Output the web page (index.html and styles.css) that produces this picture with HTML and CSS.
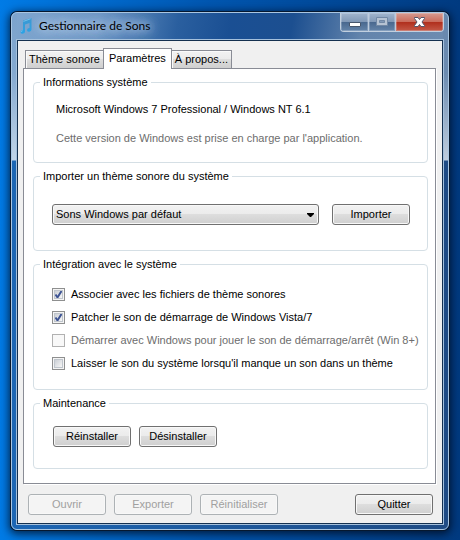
FILE: index.html
```html
<!DOCTYPE html>
<html lang="fr">
<head>
<meta charset="utf-8">
<meta name="viewport" content="width=device-width, initial-scale=1">
<title>Gestionnaire de Sons</title>
<link rel="stylesheet" href="styles.css">
</head>
<body>
<main class="window">
  <header class="titlebar">
    <svg class="app-icon" viewBox="0 0 12 16" aria-hidden="true">
      <defs><linearGradient id="note" x1="0" y1="0" x2="0" y2="1"><stop offset="0" stop-color="#3d97d0"/><stop offset="1" stop-color="#2aa3e6"/></linearGradient></defs>
      <path fill="url(#note)" d="M3 2.500 11.500 0V11.500A2.300 1.800 -20 1 1 9.500 10V5L5 6.500V13.500A2.300 1.800 -20 1 1 3 12Z"/>
      <path fill="none" stroke="#8bd0f4" stroke-width=".7" d="M3.400 3.400 10.600 .8M1 13.500 2.500 12.800"/>
    </svg>
    <h1 class="title">Gestionnaire de Sons</h1>
    <div class="controls">
      <button class="control minimize" aria-label="Réduire"><svg viewBox="0 0 28 18"><rect x="8.500" y="9.500" width="11" height="4" rx=".5" fill="#fff" stroke="#46566d"/></svg></button>
      <button class="control maximize" aria-label="Agrandir" disabled><svg viewBox="0 0 27 18"><path d="M7.500 4.500h11v8h-11zM10.500 7.500v2h5v-2z" fill="#b6c3d3" fill-rule="evenodd" stroke="#7188a5"/></svg></button>
      <button class="control close" aria-label="Fermer"><svg viewBox="0 0 47 18"><path d="M18.500 4.500h3.500l1.500 2 1.500-2h3.500v1l-2.500 3.500 2.500 3.500v1h-3.500l-1.500-2-1.500 2h-3.500v-1l2.500-3.500-2.500-3.500z" fill="#fff" stroke="#55566a"/></svg></button>
    </div>
  </header>
  <section class="client">
    <div class="tabs" role="tablist">
      <button class="tab" role="tab" aria-selected="false">Thème sonore</button>
      <button class="tab active" role="tab" aria-selected="true">Paramètres</button>
      <button class="tab" role="tab" aria-selected="false">À propos...</button>
    </div>
    <div class="panel" role="tabpanel">
      <fieldset class="group">
        <legend>Informations système</legend>
        <div class="info">
          <p>Microsoft Windows 7 Professional / Windows NT 6.1</p>
          <p class="muted">Cette version de Windows est prise en charge par l'application.</p>
        </div>
      </fieldset>
      <fieldset class="group">
        <legend>Importer un thème sonore du système</legend>
        <div class="import">
          <select class="theme-select" aria-label="Thème sonore du système"><option>Sons Windows par défaut</option></select>
          <button class="button">Importer</button>
        </div>
      </fieldset>
      <fieldset class="group">
        <legend>Intégration avec le système</legend>
        <div class="options">
          <label class="option"><input type="checkbox" checked>Associer avec les fichiers de thème sonores</label>
          <label class="option"><input type="checkbox" checked>Patcher le son de démarrage de Windows Vista/7</label>
          <label class="option muted"><input type="checkbox" disabled>Démarrer avec Windows pour jouer le son de démarrage/arrêt (Win 8+)</label>
          <label class="option"><input type="checkbox">Laisser le son du système lorsqu'il manque un son dans un thème</label>
        </div>
      </fieldset>
      <fieldset class="group">
        <legend>Maintenance</legend>
        <div class="maintenance">
          <button class="button">Réinstaller</button>
          <button class="button">Désinstaller</button>
        </div>
      </fieldset>
    </div>
    <footer class="actions">
      <button class="button" disabled>Ouvrir</button>
      <button class="button" disabled>Exporter</button>
      <button class="button" disabled>Réinitialiser</button>
      <button class="button quit">Quitter</button>
    </footer>
  </section>
</main>
</body>
</html>
```
FILE: styles.css
```css
* {
  box-sizing: border-box;
}

body {
  display: flex;
  min-height: 100vh;
  margin: 0;
  padding: 12px 11px 10px;
  background: linear-gradient(90deg, #007be6 0%, #0056b0 45%, #003a80 100%);
  color: #000;
  font: 11px/15px "Liberation Sans", Arial, sans-serif;
}

button,
select,
input {
  margin: 0;
  font: inherit;
  color: inherit;
}

/* Glass window frame */
.window {
  display: flex;
  flex: 1;
  flex-direction: column;
  min-width: 0;
  padding: 0 4px 4px;
  border: 1px solid #a9c6e2;
  border-radius: 6px;
  background:
    linear-gradient(180deg, #7ba3cd 0, #84a9d0 60px, #c0d4e8 147px, transparent 148px) left / 5px 100% no-repeat,
    linear-gradient(180deg, #6888ae 0, #6b8bb0 60px, #bfcddd 147px, transparent 148px) right / 5px 100% no-repeat,
    linear-gradient(100deg, #7fa6cf 0, #6e98c6 20%, #2a5f9f 38%, #1a4f93 50%, #1c4f90 64%, #6384ac 80%, #6d8cb1 100%) top / 100% 27px no-repeat,
    linear-gradient(90deg, #1c66b4, #1f4b84);
  box-shadow: 0 0 0 1px #06182f, 0 2px 9px 2px rgba(0, 8, 24, 0.75);
}

.titlebar {
  display: flex;
  align-items: center;
  height: 26px;
  padding-left: 4px;
}

.app-icon {
  flex: none;
  width: 12px;
  height: 16px;
  margin-right: 7px;
}

.title {
  flex: 1;
  margin: 0;
  font: 12px/18px Lato, "Open Sans", sans-serif;
  text-shadow: 0 0 8px #c8daec, 0 0 12px #b4cce6, 0 0 12px #b4cce6;
}

.controls {
  display: flex;
  align-self: flex-start;
  height: 19px;
  border: solid #c1cfdf;
  border-width: 0 1px 1px;
  border-radius: 0 0 4px 4px;
  overflow: hidden;
}

.control {
  width: 28px;
  padding: 0;
  border: 0;
  border-right: 1px solid #bdcbdc;
  background: linear-gradient(#a1b5cd 0, #8199b7 48%, #48678e 50%, #6484a9 100%);
  box-shadow: inset 0 0 0 1px rgba(230, 240, 250, 0.25);
}

.control svg {
  display: block;
  height: 18px;
}

.minimize svg {
  width: 28px;
}

.maximize,
.maximize svg {
  width: 27px;
}

.close,
.close svg {
  width: 47px;
}

.close {
  border-right: 0;
  background: linear-gradient(#d69b90 0, #ca6c5c 48%, #b02e1c 50%, #c45947 100%);
}

/* Client area */
.client {
  display: flex;
  flex: 1;
  flex-direction: column;
  padding: 7px 5px 8px 5px;
  border: 1px solid #14304f;
  outline: 1px solid #a4c0dc;
  margin: 1px;
  background: #f0f0f0;
}

.tabs {
  display: flex;
  align-items: flex-end;
  padding-left: 2px;
}

.tab {
  height: 18px;
  padding: 0 3px;
  border: 1px solid #898c95;
  border-bottom: 0;
  background: linear-gradient(#f2f2f2 0, #ebebeb 48%, #dddddd 50%, #cfcfcf 100%);
  box-shadow: inset 1px 1px #fafafa;
  white-space: nowrap;
}

.tab + .tab {
  border-left: 0;
}

.tab.active {
  position: relative;
  height: 21px;
  margin: 0 0 -1px -1px;
  padding: 0 5px 2px;
  border-left: 1px solid #898c95;
  background: #fff;
  box-shadow: none;
}

.panel {
  flex: 1;
  margin-right: 1px;
  padding: 6px 7px 13px 9px;
  border: 1px solid #898c95;
  background: #fff;
  box-shadow: 1px 1px #fff;
}

.group {
  min-width: 0;
  margin: 0 0 6px;
  padding: 0 6px;
  border: 1px solid #d5dfe5;
  border-radius: 4px;
}

.group:last-child {
  margin-bottom: 0;
}

.group legend {
  padding: 0 3px;
}

.muted {
  color: #6d6d6d;
}

.info {
  padding: 12px 16px 16px;
}

.info p {
  margin: 0;
}

.info p + p {
  margin-top: 14px;
}

.import {
  display: flex;
  gap: 13px;
  padding: 20px 11px 25px 12px;
}

.theme-select {
  flex: 1;
  min-width: 0;
  height: 21px;
  padding: 0 18px 0 3px;
  border: 1px solid #707070;
  border-radius: 3px;
  appearance: none;
  background:
    url("data:image/svg+xml,%3Csvg xmlns='http://www.w3.org/2000/svg' viewBox='0 0 7 4'%3E%3Cpath d='M0 0h7v1L4 4H3L0 1z'/%3E%3C/svg%3E") right 4px center / 7px 4px no-repeat,
    linear-gradient(#f2f2f2 0, #ebebeb 48%, #dddddd 50%, #cfcfcf 100%);
  box-shadow: inset 0 0 0 1px #f8f8f8;
}

.button {
  width: 78px;
  height: 21px;
  padding: 0;
  border: 1px solid #707070;
  border-radius: 3px;
  background: linear-gradient(#f2f2f2 0, #ebebeb 48%, #dddddd 50%, #cfcfcf 100%);
  box-shadow: inset 0 0 0 1px #f8f8f8;
}

.button:disabled {
  border-color: #adb2b5;
  background: #f4f4f4;
  color: #a0a0a0;
}

.options {
  display: flex;
  flex-direction: column;
  gap: 8px;
  padding: 15px 12px 18px;
}

.option {
  display: flex;
  align-items: center;
  gap: 6px;
  white-space: nowrap;
}

.option input {
  flex: none;
  width: 13px;
  height: 13px;
  border: 1px solid #8e8f8f;
  appearance: none;
  background: linear-gradient(135deg, #cbcfd5, #f6f6f6) content-box, #f4f4f4;
  padding: 2px;
  box-shadow: inset 0 0 0 1px #f4f4f4, inset 0 0 0 2px #bfc5cc;
}

.option input:checked {
  background:
    url("data:image/svg+xml,%3Csvg xmlns='http://www.w3.org/2000/svg' viewBox='0 0 11 11'%3E%3Cpath d='M2.500 5.500 4.500 8.500 8.500 2' fill='none' stroke='%233d5393' stroke-width='2'/%3E%3C/svg%3E") center / 11px 11px no-repeat,
    linear-gradient(135deg, #cbcfd5, #f6f6f6) content-box,
    #f4f4f4;
}

.option input:disabled {
  border-color: #b1b1b1;
  background: #f8f8f8;
  box-shadow: none;
}

.maintenance {
  display: flex;
  gap: 8px;
  padding: 15px 13px 21px;
}

.actions {
  display: flex;
  gap: 8px;
  padding: 10px 4px 0 5px;
}

.quit {
  margin-left: auto;
}
```
